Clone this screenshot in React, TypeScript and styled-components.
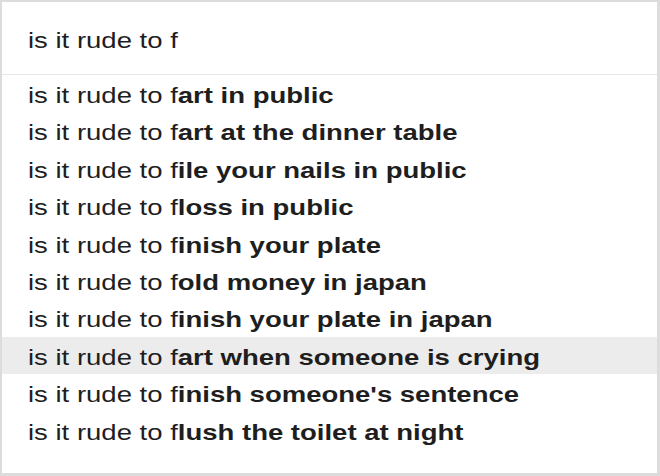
import { createGlobalStyle, styled } from 'styled-components';

const GlobalStyle = createGlobalStyle`
  html, body {
    margin: 0;
    padding: 0;
    background: #ffffff;
  }
  body {
    font-family: 'Liberation Sans', Arial, Helvetica, sans-serif;
    color: #1e1e1e;
  }
`;

const StyledBox = styled.div`
  box-sizing: border-box;
  width: 660px;
  height: 476px;
  border-style: solid;
  border-color: #dcdcdc;
  border-width: 2px 3px 3px 2px;
  background-color: #ffffff;
  display: flex;
  flex-direction: column;
`;

const StyledInput = styled.div`
  box-sizing: border-box;
  height: 73px;
  padding: 6px 0 0 26px;
  display: flex;
  align-items: center;
  border-bottom: 1px solid #e6e6e6;
`;

const StyledList = styled.ul`
  list-style: none;
  margin: 0;
  padding: 0;
`;

const StyledRow = styled.li<{ $active?: boolean }>`
  box-sizing: border-box;
  height: 37.4px;
  padding: 4px 0 0 26px;
  line-height: 33.4px;
  background-color: ${(p) => (p.$active ? '#ececec' : 'transparent')};
`;

// the shot is stretched sideways, so the text is widened to match
const StyledText = styled.span`
  display: inline-block;
  font-size: 22px;
  white-space: nowrap;
  transform: scaleX(1.25);
  transform-origin: left center;
  color: #1e1e1e;

  b {
    font-weight: 700;
  }
`;

const query = 'is it rude to f';

const suggestions = [
  'art in public',
  'art at the dinner table',
  'ile your nails in public',
  'loss in public',
  'inish your plate',
  'old money in japan',
  'inish your plate in japan',
  'art when someone is crying',
  "inish someone's sentence",
  'lush the toilet at night',
];

export default function App() {
  return (
    <>
      <GlobalStyle />
      <StyledBox>
        <StyledInput>
          <StyledText>{query}</StyledText>
        </StyledInput>
        <StyledList>
          {suggestions.map((rest, i) => (
            <StyledRow key={rest} $active={i === 7}>
              <StyledText>
                {query}
                <b>{rest}</b>
              </StyledText>
            </StyledRow>
          ))}
        </StyledList>
      </StyledBox>
    </>
  );
}
